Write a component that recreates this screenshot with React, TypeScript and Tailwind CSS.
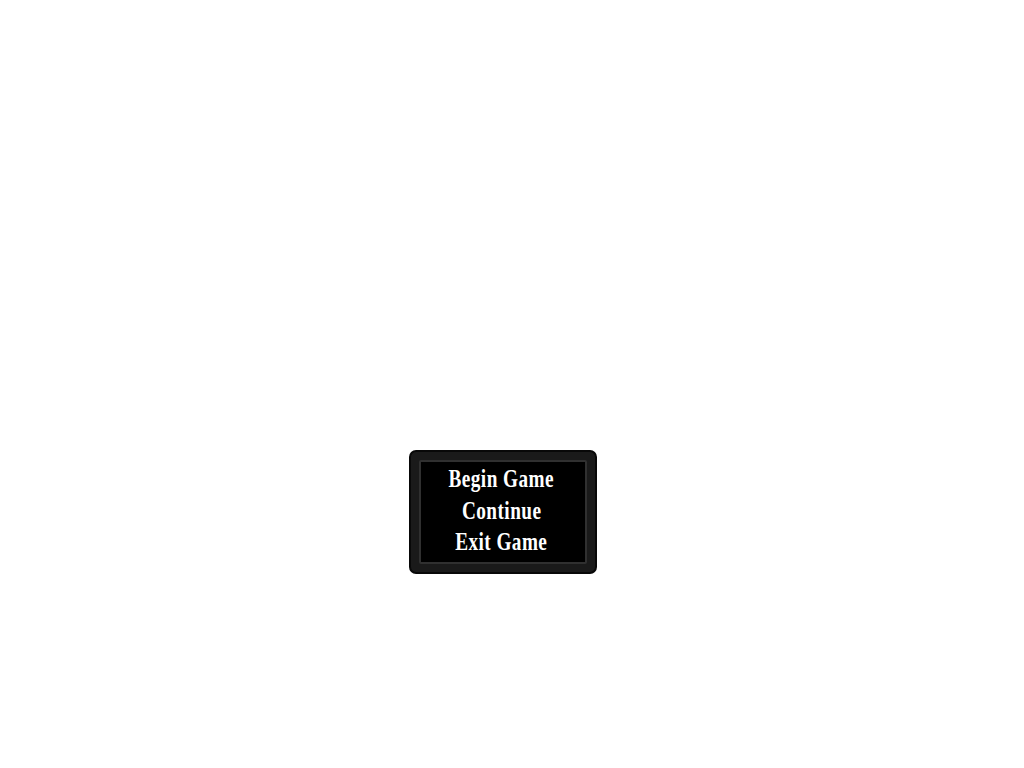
const items = ['Begin Game', 'Continue', 'Exit Game']

export default function App() {
  return (
    <div className="min-h-screen w-full bg-white pt-[450px] pl-[409px]">
      <div className="w-[188px] h-[124px] rounded-[7px] border-2 border-[#080808] bg-[#1a1a1a] p-[8px]">
        <div className="h-full w-full rounded-[2px] border-2 border-[#303030] bg-black pt-[1px]">
          <ul className="flex flex-col items-center pr-[3px]">
            {items.map(item => (
              <li
                key={item}
                className="h-[31.5px] leading-[31.5px] text-[26px] font-bold tracking-[0.6px] text-white whitespace-nowrap scale-x-[0.74] font-['Liberation_Serif',serif] cursor-pointer"
              >
                {item}
              </li>
            ))}
          </ul>
        </div>
      </div>
    </div>
  )
}
